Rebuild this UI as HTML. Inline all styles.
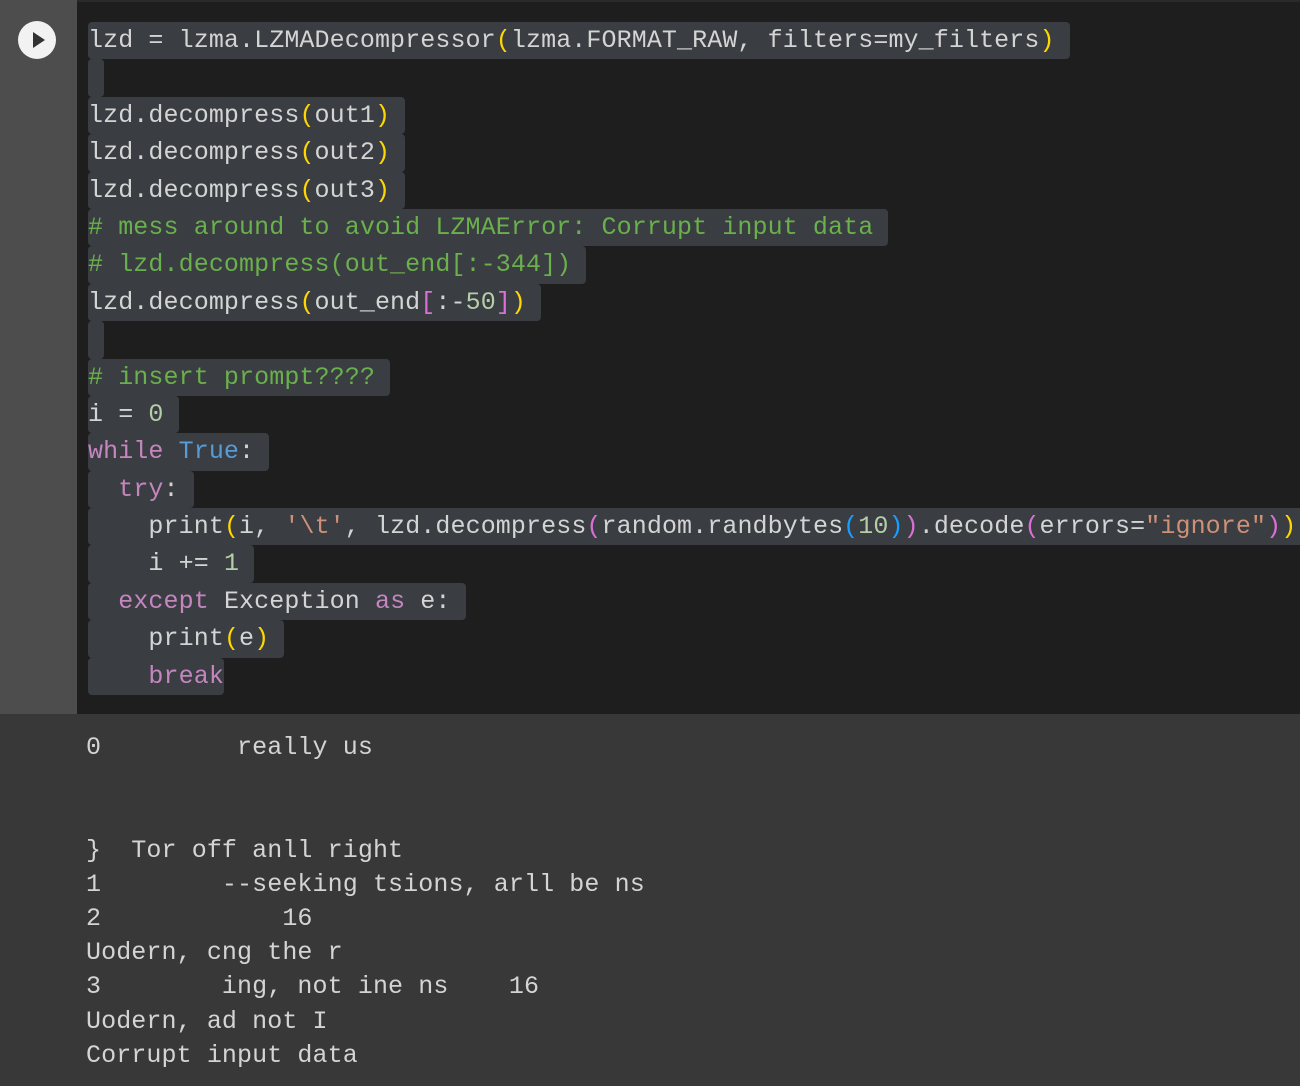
<!DOCTYPE html>
<html><head><style>
html,body{margin:0;padding:0;width:1300px;height:1086px;overflow:hidden;background:#383838;}
#gut{position:absolute;left:0;top:0;width:77px;height:714px;background:#4d4d4d;}
#code{position:absolute;left:77px;top:0;width:1223px;height:714px;background:#1e1e1e;border-top:2px solid #2a2a2a;box-sizing:border-box;}
#run{position:absolute;left:18px;top:21px;width:38px;height:38px;border-radius:50%;background:#f2f2f2;}
#run:after{content:"";position:absolute;left:15px;top:11px;border-left:12px solid #333;border-top:8px solid transparent;border-bottom:8px solid transparent;}
.lines{position:absolute;left:88px;top:22px;font-family:"Liberation Mono",monospace;font-size:25px;letter-spacing:0.1px;line-height:37.4px;color:#d4d4d4;}
.l{height:37.4px;white-space:pre;}
.l span.h{background:#3a3d41;border-radius:4px;padding-right:15px;display:inline-block;height:37.4px;}
.c{color:#6ab04c}.k{color:#c586c0}.b{color:#569cd6}.s{color:#ce9178}.n{color:#b5cea8}.y{color:#ffd700}.m{color:#da70d6}.u{color:#179fff}
#out{position:absolute;left:86px;top:731px;font-family:"Liberation Mono",monospace;font-size:25px;letter-spacing:0.1px;line-height:34.2px;color:#d4d4d4;white-space:pre;}
</style></head><body>
<div id="gut"><div id="run"></div></div>
<div id="code"></div>
<div class="lines"><div class="l"><span class="h">lzd = lzma.LZMADecompressor<span class="y">(</span>lzma.FORMAT_RAW, filters=my_filters<span class="y">)</span></span></div><div class="l"><span class="h" style="padding-right:1px"> </span></div><div class="l"><span class="h">lzd.decompress<span class="y">(</span>out1<span class="y">)</span></span></div><div class="l"><span class="h">lzd.decompress<span class="y">(</span>out2<span class="y">)</span></span></div><div class="l"><span class="h">lzd.decompress<span class="y">(</span>out3<span class="y">)</span></span></div><div class="l"><span class="h"><span class="c"># mess around to avoid LZMAError: Corrupt input data</span></span></div><div class="l"><span class="h"><span class="c"># lzd.decompress(out_end[:-344])</span></span></div><div class="l"><span class="h">lzd.decompress<span class="y">(</span>out_end<span class="m">[</span>:-<span class="n">50</span><span class="m">]</span><span class="y">)</span></span></div><div class="l"><span class="h" style="padding-right:1px"> </span></div><div class="l"><span class="h"><span class="c"># insert prompt????</span></span></div><div class="l"><span class="h">i = <span class="n">0</span></span></div><div class="l"><span class="h"><span class="k">while</span> <span class="b">True</span>:</span></div><div class="l"><span class="h">  <span class="k">try</span>:</span></div><div class="l"><span class="h">    print<span class="y">(</span>i, <span class="s">'\t'</span>, lzd.decompress<span class="m">(</span>random.randbytes<span class="u">(</span><span class="n">10</span><span class="u">)</span><span class="m">)</span>.decode<span class="m">(</span>errors=<span class="s">"ignore"</span><span class="m">)</span><span class="y">)</span></span></div><div class="l"><span class="h">    i += <span class="n">1</span></span></div><div class="l"><span class="h">  <span class="k">except</span> Exception <span class="k">as</span> e:</span></div><div class="l"><span class="h">    print<span class="y">(</span>e<span class="y">)</span></span></div><div class="l"><span class="h" style="padding-right:0">    <span class="k">break</span></span></div></div>
<div id="out">0         really us


}  Tor off anll right
1        --seeking tsions, arll be ns
2            16
Uodern, cng the r
3        ing, not ine ns    16
Uodern, ad not I
Corrupt input data</div>
</body></html>
